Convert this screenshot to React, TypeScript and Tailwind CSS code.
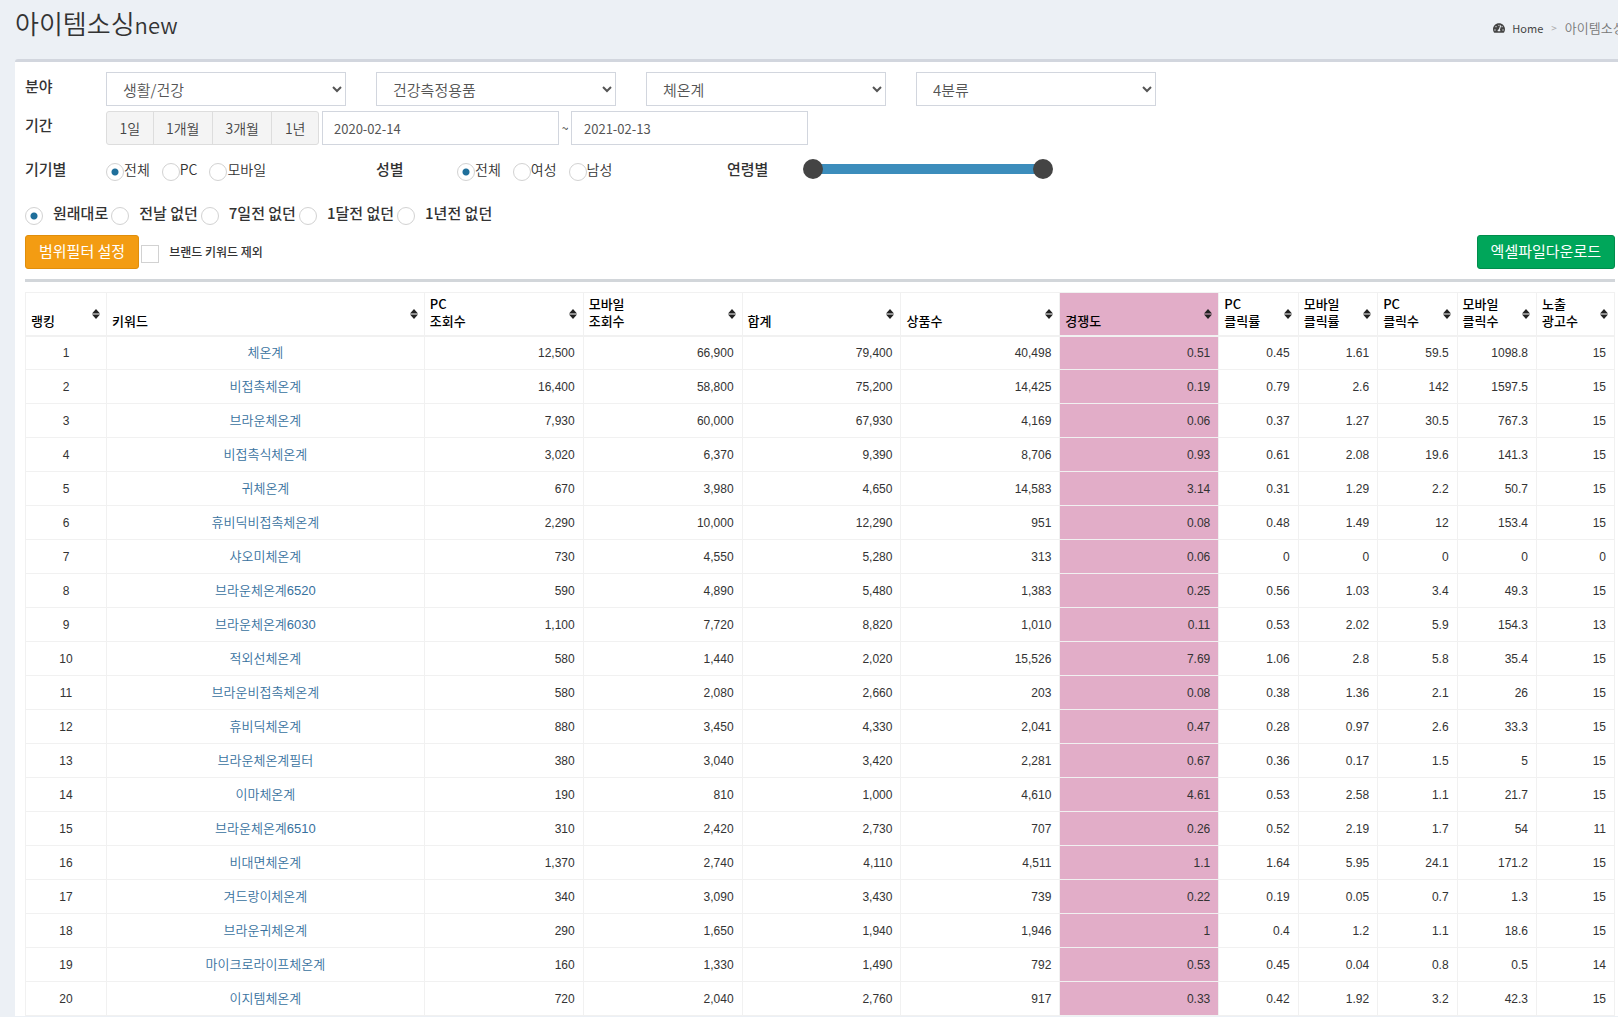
import React from "react";
import { FaTachometerAlt } from "react-icons/fa";

type Row = [string, ...string[]];

const columns: { label: string[]; width: string; pink?: boolean }[] = [
  { label: ["랭킹"], width: "w-[81px]" },
  { label: ["키워드"], width: "w-[20%]" },
  { label: ["PC", "조회수"], width: "w-[10%]" },
  { label: ["모바일", "조회수"], width: "w-[10%]" },
  { label: ["합계"], width: "w-[10%]" },
  { label: ["상품수"], width: "w-[10%]" },
  { label: ["경쟁도"], width: "w-[10%]", pink: true },
  { label: ["PC", "클릭률"], width: "w-[5%]" },
  { label: ["모바일", "클릭률"], width: "w-[5%]" },
  { label: ["PC", "클릭수"], width: "w-[5%]" },
  { label: ["모바일", "클릭수"], width: "w-[5%]" },
  { label: ["노출", "광고수"], width: "w-auto" },
];

const rows: Row[] = [
  ["체온계", "12,500", "66,900", "79,400", "40,498", "0.51", "0.45", "1.61", "59.5", "1098.8", "15"],
  ["비접촉체온계", "16,400", "58,800", "75,200", "14,425", "0.19", "0.79", "2.6", "142", "1597.5", "15"],
  ["브라운체온계", "7,930", "60,000", "67,930", "4,169", "0.06", "0.37", "1.27", "30.5", "767.3", "15"],
  ["비접촉식체온계", "3,020", "6,370", "9,390", "8,706", "0.93", "0.61", "2.08", "19.6", "141.3", "15"],
  ["귀체온계", "670", "3,980", "4,650", "14,583", "3.14", "0.31", "1.29", "2.2", "50.7", "15"],
  ["휴비딕비접촉체온계", "2,290", "10,000", "12,290", "951", "0.08", "0.48", "1.49", "12", "153.4", "15"],
  ["샤오미체온계", "730", "4,550", "5,280", "313", "0.06", "0", "0", "0", "0", "0"],
  ["브라운체온계6520", "590", "4,890", "5,480", "1,383", "0.25", "0.56", "1.03", "3.4", "49.3", "15"],
  ["브라운체온계6030", "1,100", "7,720", "8,820", "1,010", "0.11", "0.53", "2.02", "5.9", "154.3", "13"],
  ["적외선체온계", "580", "1,440", "2,020", "15,526", "7.69", "1.06", "2.8", "5.8", "35.4", "15"],
  ["브라운비접촉체온계", "580", "2,080", "2,660", "203", "0.08", "0.38", "1.36", "2.1", "26", "15"],
  ["휴비딕체온계", "880", "3,450", "4,330", "2,041", "0.47", "0.28", "0.97", "2.6", "33.3", "15"],
  ["브라운체온계필터", "380", "3,040", "3,420", "2,281", "0.67", "0.36", "0.17", "1.5", "5", "15"],
  ["이마체온계", "190", "810", "1,000", "4,610", "4.61", "0.53", "2.58", "1.1", "21.7", "15"],
  ["브라운체온계6510", "310", "2,420", "2,730", "707", "0.26", "0.52", "2.19", "1.7", "54", "11"],
  ["비대면체온계", "1,370", "2,740", "4,110", "4,511", "1.1", "1.64", "5.95", "24.1", "171.2", "15"],
  ["겨드랑이체온계", "340", "3,090", "3,430", "739", "0.22", "0.19", "0.05", "0.7", "1.3", "15"],
  ["브라운귀체온계", "290", "1,650", "1,940", "1,946", "1", "0.4", "1.2", "1.1", "18.6", "15"],
  ["마이크로라이프체온계", "160", "1,330", "1,490", "792", "0.53", "0.45", "0.04", "0.8", "0.5", "14"],
  ["이지템체온계", "720", "2,040", "2,760", "917", "0.33", "0.42", "1.92", "3.2", "42.3", "15"],
];

const PINK_CELL = 4;

const radioClass =
  "mt-1 size-[18px] shrink-0 appearance-none rounded-full border border-[#d2d2d2] bg-white checked:bg-[radial-gradient(circle,#1f6f9b_3px,transparent_4px)]";

function SortIcon() {
  return (
    <svg width="8" height="10" viewBox="0 0 8 10" className="shrink-0" aria-hidden="true">
      <path d="M4 0 8 4.4H0ZM4 10 0 5.6h8Z" fill="#222" />
    </svg>
  );
}

function FieldLabel({ children }: { children: React.ReactNode }) {
  return <span className="w-[81px] shrink-0 text-[15px] leading-5 font-medium text-[#333]">{children}</span>;
}

function RadioGroup({ name, options }: { name: string; options: string[] }) {
  return (
    <div className="flex w-[270px] gap-3" role="radiogroup" aria-label={name}>
      {options.map((o, i) => (
        <label key={o} className="flex items-start text-sm leading-5 font-[350] text-[#333]">
          <input type="radio" name={name} defaultChecked={i === 0} className={radioClass} />
          {o}
        </label>
      ))}
    </div>
  );
}

const thumbClass =
  "pointer-events-none col-start-1 row-start-1 h-5 w-full appearance-none bg-transparent [&::-webkit-slider-thumb]:pointer-events-auto [&::-webkit-slider-thumb]:size-5 [&::-webkit-slider-thumb]:appearance-none [&::-webkit-slider-thumb]:rounded-full [&::-webkit-slider-thumb]:bg-[#444]";

function AgeSlider() {
  return (
    <div className="grid w-[250px] items-center">
      <div className="col-start-1 row-start-1 mx-2 h-[10px] bg-[#3c8dbc]" />
      <input type="range" aria-label="최소 연령" min={0} max={100} defaultValue={0} className={thumbClass} />
      <input type="range" aria-label="최대 연령" min={0} max={100} defaultValue={100} className={thumbClass} />
    </div>
  );
}

export default function App() {
  return (
    <div className="min-h-screen overflow-hidden bg-[#ecf0f5] pl-[15px] font-['Noto_Sans_CJK_KR',sans-serif] text-[#333]">
      <header className="flex h-[59px] items-start justify-between">
        <h1 className="pt-[5px] text-[26px] leading-9 font-[350]">
          아이템소싱<span className="text-[22px]">new</span>
        </h1>
        <nav aria-label="breadcrumb" className="-mr-8 flex items-center pt-[18px] text-[13px] leading-5 whitespace-nowrap">
          <a href="#home" className="flex items-center gap-[7px] text-[11px] text-[#444]">
            <FaTachometerAlt className="size-3" />
            Home
          </a>
          <span className="px-2 text-[10px] text-[#aaa]">&gt;</span>
          <span className="font-[350] text-[#777]">아이템소싱new</span>
        </nav>
      </header>

      <main className="rounded-tl-[3px] border-t-[3px] border-[#d2d6de] bg-white pt-[10px] pr-[3px] pl-[10px]">
        <div className="flex">
          <span className="w-[81px] shrink-0 pt-1 text-[15px] leading-5 font-medium">분야</span>
          <div className="flex gap-[30px]">
            {["생활/건강", "건강측정용품", "체온계", "4분류"].map((v, i) => (
              <select
                key={v}
                aria-label={`분야 ${i + 1}`}
                className="h-[34px] w-60 border border-[#d2d6de] bg-white px-3 text-[15px] font-[350] text-[#555]"
              >
                <option>{v}</option>
              </select>
            ))}
          </div>
        </div>

        <div className="mt-[5px] flex">
          <span className="w-[81px] shrink-0 pt-1 text-[15px] leading-5 font-medium">기간</span>
          <div className="flex items-center">
            <div className="flex w-[213px] overflow-hidden rounded-[3px] border border-[#ddd] bg-[#f4f4f4] text-sm font-[350] text-[#444]">
              {["1일", "1개월", "3개월", "1년"].map((v) => (
                <button key={v} type="button" className="h-8 grow border-l border-[#ddd] px-2 first:border-l-0">
                  {v}
                </button>
              ))}
            </div>
            <input
              type="text"
              aria-label="시작일"
              defaultValue="2020-02-14"
              className="ml-[3px] h-[34px] w-[237px] border border-[#d2d6de] px-[11px] text-[13px] text-[#555]"
            />
            <span className="w-3 text-center text-xs">~</span>
            <input
              type="text"
              aria-label="종료일"
              defaultValue="2021-02-13"
              className="h-[34px] w-[237px] border border-[#d2d6de] px-3 text-[13px] text-[#555]"
            />
          </div>
        </div>

        <div className="mt-[14px] flex items-start">
          <FieldLabel>기기별</FieldLabel>
          <RadioGroup name="기기별" options={["전체", "PC", "모바일"]} />
          <FieldLabel>성별</FieldLabel>
          <RadioGroup name="성별" options={["전체", "여성", "남성"]} />
          <span className="w-[76px] shrink-0 text-[15px] leading-5 font-medium">연령별</span>
          <AgeSlider />
        </div>

        <div className="mt-[22px] flex gap-[3px]" role="radiogroup" aria-label="비교 기준">
          {["원래대로", "전날 없던", "7일전 없던", "1달전 없던", "1년전 없던"].map((v, i) => (
            <label key={v} className="flex items-start gap-[10px] text-[15px] leading-5 font-medium">
              <input type="radio" name="compare" defaultChecked={i === 0} className={radioClass} />
              {v}
            </label>
          ))}
        </div>

        <div className="mt-[10px] flex justify-between">
          <div className="flex">
            <button
              type="button"
              className="h-[34px] rounded-[3px] border border-[#e08e0b] bg-[#f39c12] px-[13px] pb-[2px] text-[15px] text-white"
            >
              범위필터 설정
            </button>
            <label className="ml-[2px] flex items-center gap-[10px] text-xs leading-5 font-medium">
              <input type="checkbox" className="mt-1 size-[18px] appearance-none border border-[#d2d2d2] bg-white" />
              브랜드 키워드 제외
            </label>
          </div>
          <button
            type="button"
            className="h-[34px] rounded-[3px] border border-[#008d4c] bg-[#00a65a] px-[13px] pb-[2px] text-[15px] text-white"
          >
            엑셀파일다운로드
          </button>
        </div>

        <hr className="mt-[10px] mb-[10px] border-t-[3px] border-[#d2d6da]" />

        <table className="w-full table-fixed border-collapse border border-[#f1f1f1] text-xs">
          <thead>
            <tr className="h-[43px] border-b-2 border-[#f1f1f1]">
              {columns.map((c, i) => (
                <th
                  key={i}
                  scope="col"
                  className={`${c.width} ${c.pink ? "bg-[#e2adc8]" : "border-x border-[#f1f1f1]"} p-0 align-bottom`}
                >
                  <button
                    type="button"
                    className="flex h-[41px] w-full items-center justify-between pr-[6px] pl-[5px] text-left text-[13px] leading-[17px] font-medium text-black"
                  >
                    <span className="self-end pb-[6px]">
                      {c.label.map((l) => (
                        <span key={l} className="block">
                          {l}
                        </span>
                      ))}
                    </span>
                    <SortIcon />
                  </button>
                </th>
              ))}
            </tr>
          </thead>
          <tbody className="font-['Liberation_Sans','Noto_Sans_CJK_KR',sans-serif]">
            {rows.map(([keyword, ...values], r) => (
              <tr key={keyword} className="h-[34px] border-b border-[#f1f1f1]">
                <td className="border-x border-[#f1f1f1] p-0 text-center">{r + 1}</td>
                <td className="border-x border-[#f1f1f1] p-0 text-center">
                  <a href="#keyword" className="text-[13px] leading-5 font-[350] text-[#37719e]">
                    {keyword}
                  </a>
                </td>
                {values.map((v, i) => (
                  <td
                    key={i}
                    className={`${i === PINK_CELL ? "bg-[#e2adc8]" : "border-x border-[#f1f1f1]"} py-0 pr-2 pl-0 text-right`}
                  >
                    {v}
                  </td>
                ))}
              </tr>
            ))}
          </tbody>
        </table>
      </main>
    </div>
  );
}
